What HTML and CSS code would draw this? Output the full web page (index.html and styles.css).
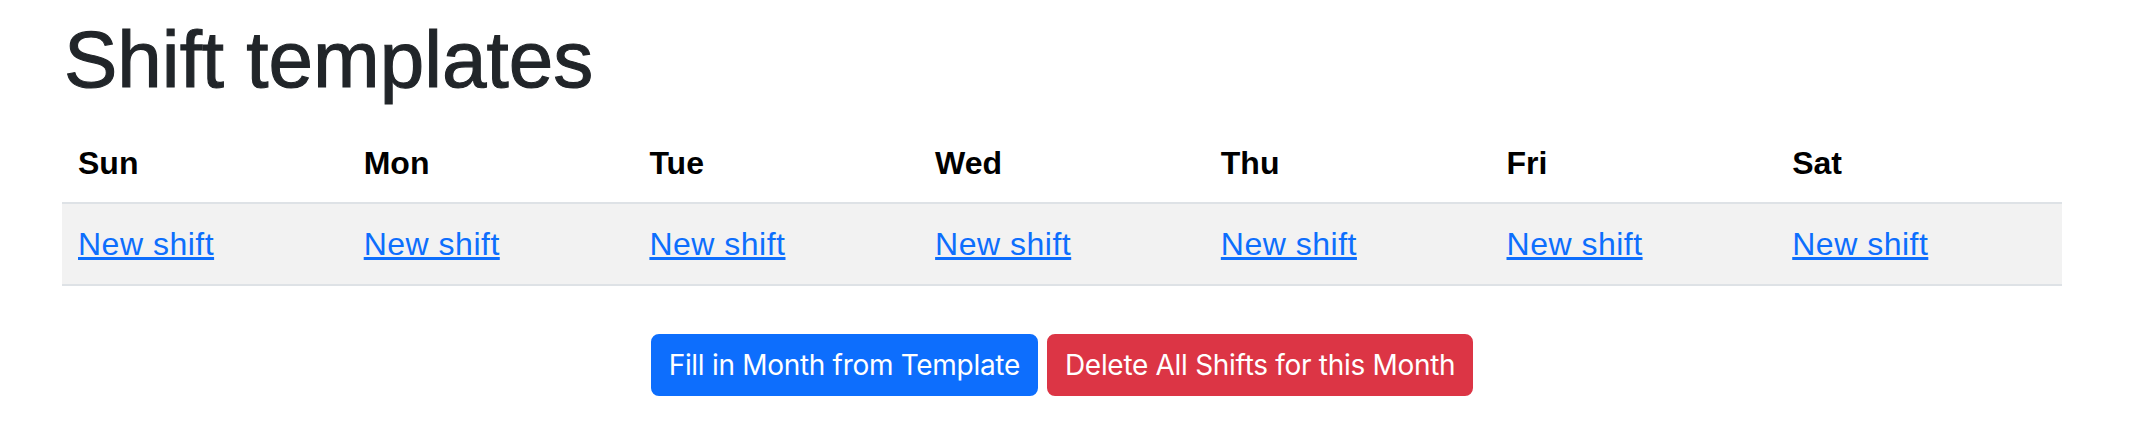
FILE: index.html
```html
<!DOCTYPE html>
<html lang="en">
<head>
<meta charset="utf-8">
<title>Shift templates</title>
<link rel="stylesheet" href="styles.css">
</head>
<body>
<main class="page">
  <h1 class="title">Shift templates</h1>
  <table class="week">
    <thead>
      <tr>
        <th>Sun</th><th>Mon</th><th>Tue</th><th>Wed</th><th>Thu</th><th>Fri</th><th>Sat</th>
      </tr>
    </thead>
    <tbody>
      <tr>
        <td><a href="#" class="new-link">New shift</a></td>
        <td><a href="#" class="new-link">New shift</a></td>
        <td><a href="#" class="new-link">New shift</a></td>
        <td><a href="#" class="new-link">New shift</a></td>
        <td><a href="#" class="new-link">New shift</a></td>
        <td><a href="#" class="new-link">New shift</a></td>
        <td><a href="#" class="new-link">New shift</a></td>
      </tr>
    </tbody>
  </table>
  <div class="actions">
    <button class="btn btn-primary" type="button">Fill in Month from Template</button>
    <button class="btn btn-danger" type="button">Delete All Shifts for this Month</button>
  </div>
</main>
</body>
</html>
```
FILE: styles.css
```css
html, body {
  margin: 0;
  padding: 0;
  background: #ffffff;
}

body {
  font-family: "Liberation Sans", Arial, Helvetica, sans-serif;
  color: #212529;
  font-size: 32px;
  line-height: 1.5;
}

.page {
  padding: 12px 70px 0 62px;
}

.title {
  margin: 0 0 14px 2px;
  font-size: 80px;
  font-weight: 500;
  line-height: 96px;
  color: #212529;
  -webkit-text-stroke: 1.1px #212529;
}

.week {
  width: 2000px;
  border-collapse: collapse;
  table-layout: fixed;
}

.week th {
  text-align: left;
  font-weight: bold;
  color: #000000;
  padding: 17px 16px 15px 16px;
  line-height: 48px;
  border-bottom: 2px solid #dee2e6;
}

.week td {
  background: #f2f2f2;
  padding: 16px;
  line-height: 48px;
  border-bottom: 2px solid #dee2e6;
}

.new-link {
  color: #0d6efd;
  text-decoration: underline;
  letter-spacing: 0.5px;
}

.actions {
  width: 2000px;
  margin-top: 48px;
  display: flex;
  justify-content: center;
  gap: 9px;
}

.btn {
  font-family: Inter, "Noto Sans", sans-serif;
  font-size: 28px;
  line-height: 42px;
  letter-spacing: -0.3px;
  padding: 8px 16px;
  border: 2px solid transparent;
  border-radius: 8px;
  color: #ffffff;
  cursor: pointer;
}

.btn-primary {
  background: #0d6efd;
  border-color: #0d6efd;
}

.btn-danger {
  background: #dc3545;
  border-color: #dc3545;
}
```
